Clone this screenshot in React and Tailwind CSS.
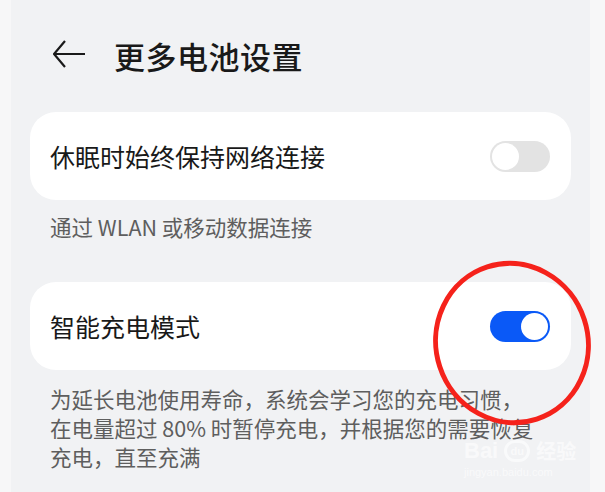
import React from 'react';

const font = { fontFamily: '"Noto Sans CJK SC", "Noto Sans", sans-serif' };

const Toggle = ({ on }) => (
  <div
    className={`w-[60px] h-[31px] rounded-full p-[2px] flex ${
      on ? 'bg-[#0a59f7] justify-end' : 'bg-[#e3e3e3] justify-start'
    }`}
  >
    <div className="w-[27px] h-[27px] rounded-full bg-white" />
  </div>
);

const Card = ({ label, on }) => (
  <div className="h-[88px] bg-white rounded-[26px] flex items-center justify-between pl-[20px] pr-[21px]">
    <span className="text-[25px] leading-none text-[#191919]">{label}</span>
    <Toggle on={on} />
  </div>
);

export default function App() {
  return (
    <div className="w-[605px] h-[492px] bg-[#f7f7f8] flex overflow-hidden" style={font}>
      <div className="w-[11px]" />
      <div className="flex-1 bg-[#f1f2f4] relative px-[19px] flex flex-col">
        {/* 标题栏 */}
        <div className="h-[112px] flex items-center pl-[23px] pb-[2px]">
          <svg width="32" height="30" viewBox="0 0 32 30" className="text-[#1a1a1a]">
            <path d="M12 1 L1 14 L12 27 M1 14 H32" fill="none" stroke="currentColor" strokeWidth="2.2" />
          </svg>
          <span className="ml-[29px] text-[31px] leading-none font-medium text-[#191919] tracking-[0.5px]">
            更多电池设置
          </span>
        </div>

        <Card label="休眠时始终保持网络连接" on={false} />
        <div className="h-[82px] pl-[20px] pt-[13px] text-[21.5px] leading-[28px] text-[#5e5e5e]">
          通过 WLAN 或移动数据连接
        </div>

        <Card label="智能充电模式" on />
        <div className="pl-[20px] pt-[14px] text-[21.5px] leading-[29px] text-[#5e5e5e]">
          为延长电池使用寿命，系统会学习您的充电习惯，
          <br />
          在电量超过 80% 时暂停充电，并根据您的需要恢复
          <br />
          充电，直至充满
        </div>

        {/* 红圈标注 */}
        <svg className="absolute left-[412px] top-[252px]" width="182" height="180" viewBox="0 0 182 180">
          <ellipse
            cx="89"
            cy="91"
            rx="76"
            ry="80"
            transform="rotate(-18 89 91)"
            fill="none"
            stroke="#f5221b"
            strokeWidth="5"
          />
        </svg>

        {/* 水印 */}
        <div className="absolute left-[453px] top-[440px] flex flex-col items-start text-white/60">
          <div className="flex items-center gap-[6px] text-[22px] leading-none font-bold" style={{ fontFamily: '"Liberation Sans", sans-serif' }}>
            <span>Bai</span>
            <span className="w-[26px] h-[22px] rounded-full border-[3px] border-white/60 text-[11px] flex items-center justify-center">du</span>
            <span className="text-[20px]" style={font}>经验</span>
          </div>
          <div className="text-[11px] leading-none mt-[5px]" style={{ fontFamily: '"Liberation Sans", sans-serif' }}>
            jingyan.baidu.com
          </div>
        </div>
      </div>
      <div className="w-[15px]" />
    </div>
  );
}
